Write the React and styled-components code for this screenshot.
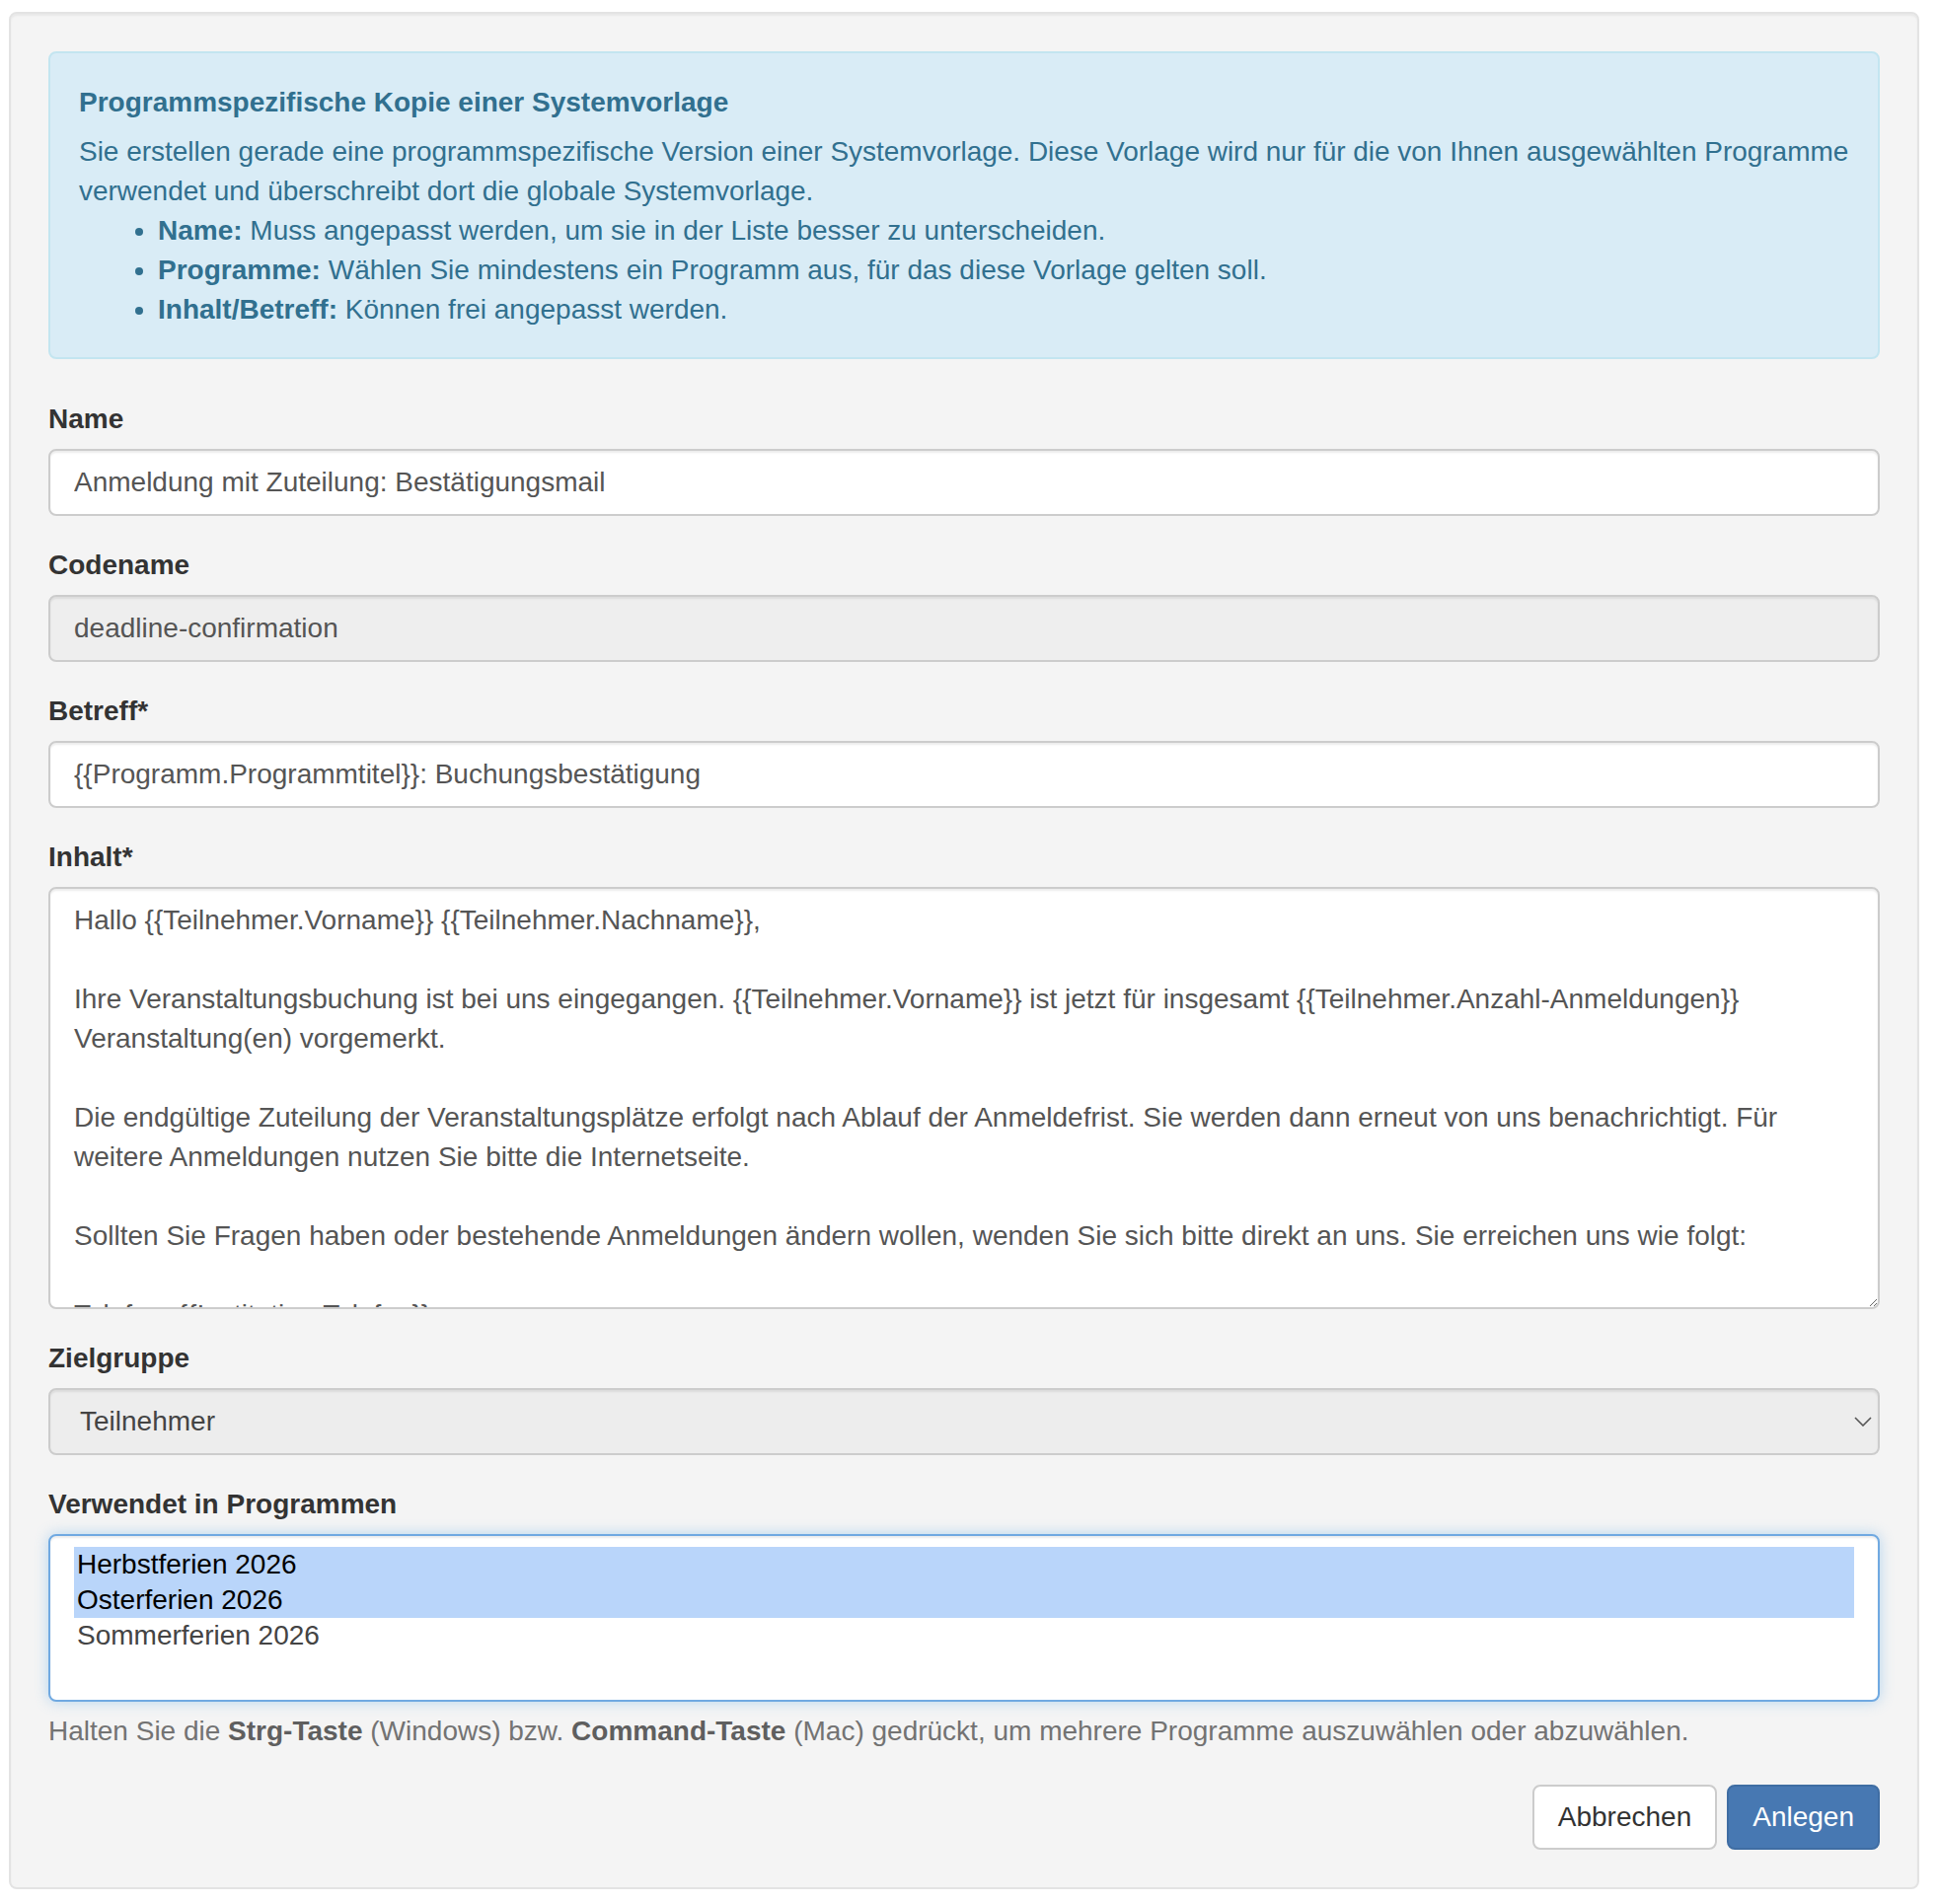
import React from "react";
import styled, { createGlobalStyle } from "styled-components";

const GlobalStyle = createGlobalStyle`
  html, body {
    margin: 0;
    padding: 0;
    background: #ffffff;
  }
  body {
    font-family: "Liberation Sans", Helvetica, Arial, sans-serif;
    font-size: 28px;
    line-height: 40px;
    color: #333333;
  }
  * { box-sizing: border-box; }
`;

const Page = styled.div`
  padding: 12px 19px 16px 9px;
`;

const Well = styled.div`
  background: #f4f4f4;
  border: 2px solid #e3e3e3;
  border-radius: 8px;
  box-shadow: inset 0 2px 2px rgba(0, 0, 0, 0.05);
  padding: 38px;
`;

const Alert = styled.div`
  background: #d9ecf6;
  border: 2px solid #c3e5f0;
  border-radius: 8px;
  color: #31708f;
  padding: 30px 22px 28px 29px;
  margin-bottom: 41px;
`;

const AlertTitle = styled.div`
  font-weight: bold;
  margin-bottom: 10px;
`;

const AlertText = styled.p`
  margin: 0;
  letter-spacing: -0.02px;
`;

const BulletList = styled.ul`
  margin: 0;
  padding-left: 80px;
`;

const Form = styled.form`
  display: flex;
  flex-direction: column;
`;

const FormGroup = styled.div`
  display: flex;
  flex-direction: column;
  margin-bottom: ${(p) => (p.$last ? "34px" : "30px")};
`;

const Label = styled.label`
  font-weight: bold;
  color: #333333;
  margin-bottom: 10px;
`;

const fieldBase = `
  width: 100%;
  font-family: "Liberation Sans", Helvetica, Arial, sans-serif;
  font-size: 28px;
  line-height: 40px;
  color: #555555;
  border: 2px solid #cccccc;
  border-radius: 8px;
  box-shadow: inset 0 2px 2px rgba(0, 0, 0, 0.075);
  outline: none;
`;

const TextInput = styled.input`
  ${fieldBase}
  height: 68px;
  padding: 12px 24px;
  background: ${(p) => (p.readOnly ? "#eeeeee" : "#ffffff")};
`;

const TextArea = styled.textarea`
  ${fieldBase}
  display: block;
  height: 428px;
  padding: 12px 24px;
  background: #ffffff;
  resize: vertical;
  overflow-y: auto;
  scrollbar-width: none;
  &::-webkit-scrollbar { display: none; }
`;

const SelectWrap = styled.div`
  position: relative;
`;

const SelectBox = styled.div`
  ${fieldBase}
  height: 68px;
  padding: 12px 60px 12px 30px;
  background: #ededed;
  color: #444444;
  cursor: default;
`;

const Chevron = styled.svg`
  position: absolute;
  right: 8px;
  top: 29px;
  width: 18px;
  height: 10px;
`;

const ListBox = styled.div`
  ${fieldBase}
  height: 170px;
  padding: 11px 24px;
  background: #ffffff;
  border-color: #70a9e1;
  box-shadow: inset 0 2px 2px rgba(0, 0, 0, 0.075), 0 0 14px rgba(102, 175, 233, 0.45);
`;

const ListOption = styled.div`
  height: 36px;
  line-height: 36px;
  padding: 0 3px;
  background: ${(p) => (p.$selected ? "#b9d5fa" : "transparent")};
  color: ${(p) => (p.$selected ? "#000000" : "#444444")};
`;

const HelpText = styled.p`
  margin: 10px 0 0;
  color: #737373;
  b { color: #5f5f5f; }
`;

const Actions = styled.div`
  display: flex;
  justify-content: flex-end;
  gap: 10px;
`;

const Button = styled.button`
  font-family: "Liberation Sans", Helvetica, Arial, sans-serif;
  font-size: 28px;
  line-height: 40px;
  height: 66px;
  padding: 11px 24px;
  border-radius: 8px;
  border: 2px solid ${(p) => (p.$primary ? "#3f6da3" : "#cccccc")};
  background: ${(p) => (p.$primary ? "#4778b2" : "#ffffff")};
  color: ${(p) => (p.$primary ? "#ffffff" : "#333333")};
  cursor: pointer;
`;

const bodyText = `Hallo {{Teilnehmer.Vorname}} {{Teilnehmer.Nachname}},

Ihre Veranstaltungsbuchung ist bei uns eingegangen. {{Teilnehmer.Vorname}} ist jetzt für insgesamt {{Teilnehmer.Anzahl-Anmeldungen}} Veranstaltung(en) vorgemerkt.

Die endgültige Zuteilung der Veranstaltungsplätze erfolgt nach Ablauf der Anmeldefrist. Sie werden dann erneut von uns benachrichtigt. Für weitere Anmeldungen nutzen Sie bitte die Internetseite.

Sollten Sie Fragen haben oder bestehende Anmeldungen ändern wollen, wenden Sie sich bitte direkt an uns. Sie erreichen uns wie folgt:

Telefon: {{Institution.Telefon}}
E-Mail: {{Institution.E-Mail}}

Mit freundlichen Grüßen
{{Institution.Name}}`;

const programs = [
  { name: "Herbstferien 2026", selected: true },
  { name: "Osterferien 2026", selected: true },
  { name: "Sommerferien 2026", selected: false },
];

export default function App() {
  return (
    <>
      <GlobalStyle />
      <Page>
        <Well>
          <Alert>
            <AlertTitle>Programmspezifische Kopie einer Systemvorlage</AlertTitle>
            <AlertText>
              Sie erstellen gerade eine programmspezifische Version einer Systemvorlage. Diese Vorlage
              wird nur für die von Ihnen ausgewählten Programme verwendet und überschreibt dort die
              globale Systemvorlage.
            </AlertText>
            <BulletList>
              <li><b>Name:</b> Muss angepasst werden, um sie in der Liste besser zu unterscheiden.</li>
              <li><b>Programme:</b> Wählen Sie mindestens ein Programm aus, für das diese Vorlage gelten soll.</li>
              <li><b>Inhalt/Betreff:</b> Können frei angepasst werden.</li>
            </BulletList>
          </Alert>

          <Form onSubmit={(e) => e.preventDefault()}>
            <FormGroup>
              <Label>Name</Label>
              <TextInput defaultValue="Anmeldung mit Zuteilung: Bestätigungsmail" />
            </FormGroup>
            <FormGroup>
              <Label>Codename</Label>
              <TextInput readOnly defaultValue="deadline-confirmation" />
            </FormGroup>
            <FormGroup>
              <Label>Betreff*</Label>
              <TextInput defaultValue="{{Programm.Programmtitel}}: Buchungsbestätigung" />
            </FormGroup>
            <FormGroup>
              <Label>Inhalt*</Label>
              <TextArea defaultValue={bodyText} />
            </FormGroup>
            <FormGroup>
              <Label>Zielgruppe</Label>
              <SelectWrap>
                <SelectBox>Teilnehmer</SelectBox>
                <Chevron viewBox="0 0 18 10">
                  <path d="M1 1 L9 9 L17 1" fill="none" stroke="#555" strokeWidth="1.6" />
                </Chevron>
              </SelectWrap>
            </FormGroup>
            <FormGroup $last>
              <Label>Verwendet in Programmen</Label>
              <ListBox role="listbox" aria-multiselectable="true">
                {programs.map((p) => (
                  <ListOption key={p.name} $selected={p.selected} role="option" aria-selected={p.selected}>
                    {p.name}
                  </ListOption>
                ))}
              </ListBox>
              <HelpText>
                Halten Sie die <b>Strg-Taste</b> (Windows) bzw. <b>Command-Taste</b> (Mac) gedrückt, um
                mehrere Programme auszuwählen oder abzuwählen.
              </HelpText>
            </FormGroup>
            <Actions>
              <Button type="button">Abbrechen</Button>
              <Button type="submit" $primary>Anlegen</Button>
            </Actions>
          </Form>
        </Well>
      </Page>
    </>
  );
}
